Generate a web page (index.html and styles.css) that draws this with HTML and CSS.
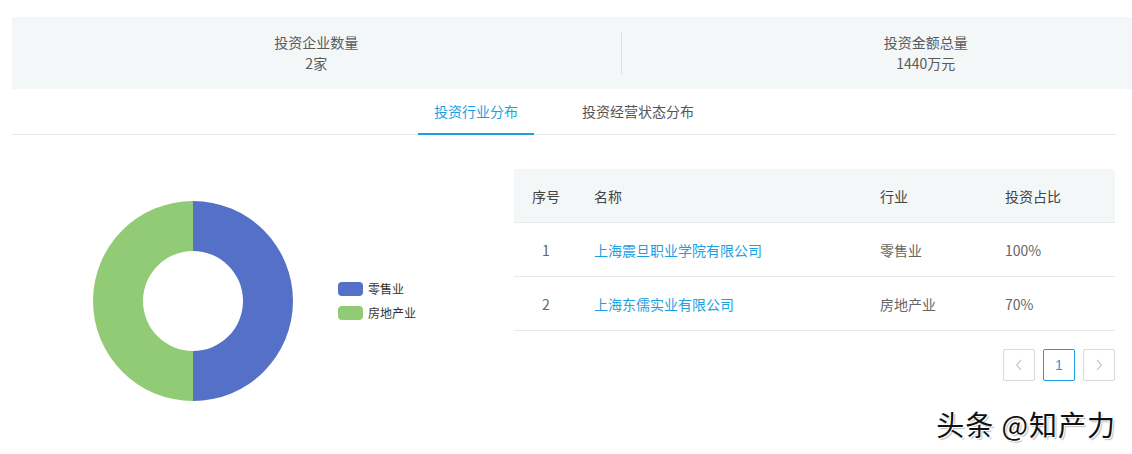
FILE: index.html
```html
<!DOCTYPE html>
<html lang="zh-CN">
<head>
<meta charset="utf-8">
<title>投资分布</title>
<link rel="stylesheet" href="styles.css">
</head>
<body>
<div class="page">
  <div class="stats">
    <div class="stat">
      <div class="stat-label">投资企业数量</div>
      <div class="stat-value">2家</div>
    </div>
    <div class="stat-divider"></div>
    <div class="stat">
      <div class="stat-label">投资金额总量</div>
      <div class="stat-value">1440万元</div>
    </div>
  </div>

  <div class="tabs">
    <div class="tab tab-active">投资行业分布</div>
    <div class="tab">投资经营状态分布</div>
  </div>

  <div class="content">
    <div class="chart">
      <svg class="donut" width="200" height="200" viewBox="0 0 200 200">
        <path d="M100,0 A100,100 0 0 1 100,200 L100,150 A50,50 0 0 0 100,50 Z" fill="#5571c7"/>
        <path d="M100,200 A100,100 0 0 1 100,0 L100,50 A50,50 0 0 0 100,150 Z" fill="#92cb75"/>
      </svg>
      <div class="legend">
        <div class="legend-item"><span class="swatch swatch-blue"></span>零售业</div>
        <div class="legend-item"><span class="swatch swatch-green"></span>房地产业</div>
      </div>
    </div>

    <div class="table-area">
      <table class="table">
        <thead>
          <tr>
            <th class="col-idx">序号</th>
            <th class="col-name">名称</th>
            <th class="col-ind">行业</th>
            <th class="col-pct">投资占比</th>
          </tr>
        </thead>
        <tbody>
          <tr>
            <td class="col-idx">1</td>
            <td class="col-name"><a class="link">上海震旦职业学院有限公司</a></td>
            <td class="col-ind">零售业</td>
            <td class="col-pct">100%</td>
          </tr>
          <tr>
            <td class="col-idx">2</td>
            <td class="col-name"><a class="link">上海东儒实业有限公司</a></td>
            <td class="col-ind">房地产业</td>
            <td class="col-pct">70%</td>
          </tr>
        </tbody>
      </table>
      <div class="pagination">
        <span class="page-btn page-disabled">
          <svg width="10" height="12" viewBox="0 0 10 12"><path d="M7,1 L2.5,6 L7,11" fill="none" stroke="#c8c8c8" stroke-width="1.2"/></svg>
        </span>
        <span class="page-btn page-active">1</span>
        <span class="page-btn page-disabled">
          <svg width="10" height="12" viewBox="0 0 10 12"><path d="M3,1 L7.5,6 L3,11" fill="none" stroke="#c8c8c8" stroke-width="1.2"/></svg>
        </span>
      </div>
    </div>
  </div>

  <div class="watermark">头条 @知产力</div>
</div>
</body>
</html>
```

FILE: styles.css
```css
html, body {
  margin: 0;
  padding: 0;
  background: #ffffff;
  overflow: hidden;
}

body {
  width: 1132px;
  height: 454px;
  position: relative;
  font-family: "Noto Sans CJK SC", "Liberation Sans", sans-serif;
  font-size: 14px;
  color: #555;
}

.page {
  padding-left: 12px;
  width: 1104px;
}

.stats {
  margin-top: 17px;
  width: 1218px;
  height: 72px;
  background: #f3f7f8;
  display: flex;
  align-items: center;
}

.stat {
  flex: 1;
  text-align: center;
  line-height: 21px;
  font-size: 14px;
  color: #5a5a5a;
}

.stat-divider {
  width: 1px;
  height: 42px;
  background: #dcdfe1;
}

.tabs {
  display: flex;
  justify-content: center;
  gap: 32px;
  border-bottom: 1px solid #e8e8e8;
}

.tab {
  padding: 12px 16px;
  line-height: 20px;
  font-size: 14px;
  color: #555;
  margin-bottom: -1px;
  border-bottom: 2px solid transparent;
}

.tab-active {
  color: #1d9fe3;
  border-bottom-color: #1d9fe3;
}

.content {
  display: grid;
  grid-template-columns: 502px 1fr;
  margin-top: 34px;
}

.chart {
  display: flex;
  align-items: center;
  height: 260px;
  margin-top: 2px;
}

.donut {
  margin-left: 81px;
  display: block;
}

.legend {
  margin-left: 45px;
  display: flex;
  flex-direction: column;
  gap: 10px;
}

.legend-item {
  display: flex;
  align-items: center;
  font-size: 12px;
  line-height: 14px;
  color: #333;
}

.swatch {
  width: 25px;
  height: 14px;
  border-radius: 4px;
  margin-right: 5px;
}

.swatch-blue { background: #5571c7; }
.swatch-green { background: #92cb75; }

.table-area {
  display: flex;
  flex-direction: column;
}

.table {
  width: 601px;
  border-collapse: collapse;
  font-size: 14px;
}

.table th {
  background: #f3f7f8;
  font-weight: normal;
  color: #444;
  height: 53px;
  border-bottom: 1px solid #e8e8e8;
  text-align: left;
  padding: 0 16px;
}

.table td {
  height: 53px;
  border-bottom: 1px solid #e8e8e8;
  color: #666;
  text-align: left;
  padding: 0 16px;
}

.table .col-idx {
  width: 32px;
  text-align: center;
}

.table .col-name { width: 254px; }
.table .col-ind { width: 93px; }

.link {
  color: #1d9fe3;
  text-decoration: none;
}

.pagination {
  display: flex;
  justify-content: flex-end;
  gap: 8px;
  margin-top: 18px;
  width: 601px;
}

.page-btn {
  width: 30px;
  height: 30px;
  border: 1px solid #d9d9d9;
  border-radius: 2px;
  display: flex;
  align-items: center;
  justify-content: center;
  font-family: "Liberation Sans", sans-serif;
  font-size: 14px;
  background: #fff;
}

.page-active {
  border-color: #1d9fe3;
  color: #1d9fe3;
}

.watermark {
  position: absolute;
  right: 16px;
  top: 404px;
  font-size: 28px;
  line-height: 40px;
  letter-spacing: 1px;
  color: #111;
  text-shadow: 1px 1px 0 #fff, -1px -1px 0 #fff, 2px 2px 1px rgba(0,0,0,0.25);
}
```
